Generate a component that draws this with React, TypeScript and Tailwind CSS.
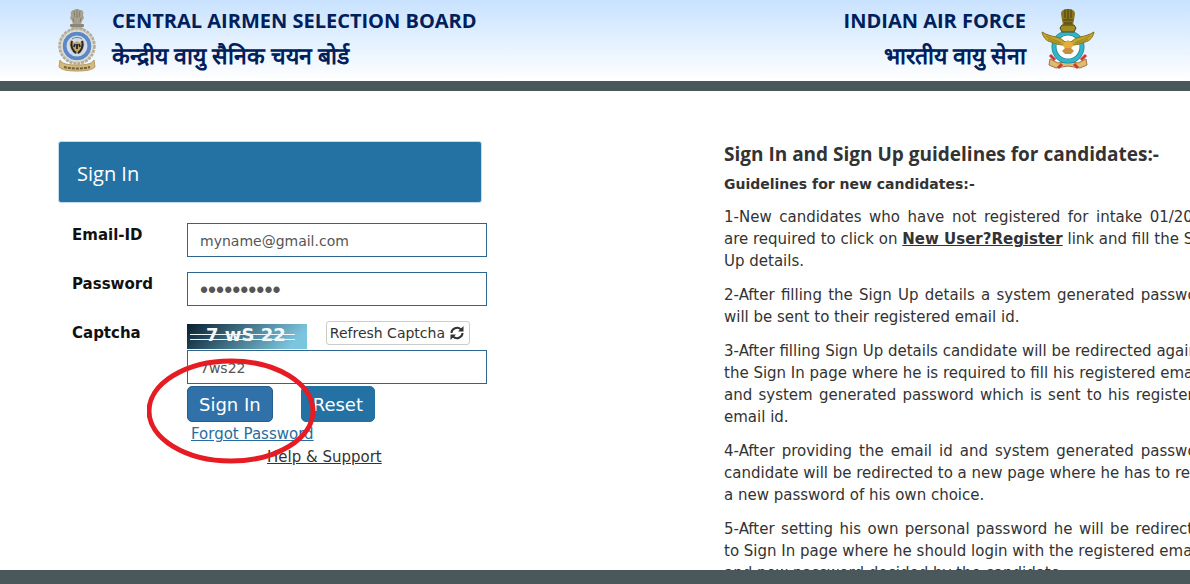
import React, { useState } from "react";

const AirmenLogo = () => (
  <svg viewBox="0 0 40 64" className="h-16 w-10 shrink-0" aria-hidden="true">
    {/* lion capital */}
    <path d="M14 7c-1-3 1-5 3-5 1-1.500 5-1.500 6 0 3 0 4 2 3 5l1 3-2 3-1 4h-8l-1-4-2-3z" fill="#a8a191" />
    <path d="M17 3c1 2 0 4 1 6M23 3c-1 2 0 4-1 6M20 2v8M16 10l1 4M24 10l-1 4" stroke="#857d6a" strokeWidth="1" fill="none" />
    <rect x="13" y="16" width="14" height="3" rx="1" fill="#8d8676" />
    <path d="M15 19h10l2 3H13z" fill="#b5ad9b" />
    {/* wreath and ring */}
    <circle cx="20" cy="38" r="17.500" fill="#d6d3c8" stroke="#b3ac98" strokeWidth="2.500" strokeDasharray="3 1" />
    <circle cx="20" cy="38" r="12.500" fill="#cddcf0" stroke="#5c88c6" strokeWidth="4" />
    <circle cx="20" cy="38" r="15" fill="none" stroke="#e3e1d8" strokeWidth="1" />
    <path d="M13 33c2-2 3 0 4 2l3-2 3 2c1-2 2-4 4-2 1 5-1 11-5 13h-4c-4-2-6-8-5-13z" fill="#c4a262" />
    <path d="M15 33c-2 5 1 10 4 12M25 33c2 5-1 10-4 12M18 36l-1 3M22 36l1 3M20 36v5" stroke="#23252c" strokeWidth="1.800" fill="none" />
    <path d="M15 31c3-2 7-2 10 0" stroke="#77777b" strokeWidth="1" fill="none" />
    {/* scroll */}
    <path d="M3 52c2 4 8 5 17 5s15-1 17-5l1 7c-3 3-9 4-18 4S5 62 2 59z" fill="#d0ba82" stroke="#b39c63" strokeWidth="1" />
    <path d="M7 59c7 2 19 2 26 0" stroke="#756133" strokeWidth="2" strokeDasharray="3 1" fill="none" />
  </svg>
);

const AirForceLogo = () => (
  <svg viewBox="0 0 54 62" className="h-[62px] w-[54px] shrink-0" aria-hidden="true">
    {/* crossed ribbons */}
    <path d="M9 51l8 4 10-2 10 2 8-4 1 6-7 3-12-2-12 2-7-3z" fill="#dcbb74" stroke="#a1763a" strokeWidth="1" />
    <path d="M9 47l5 5M45 47l-5 5M17 60l4-4M37 60l-4-4" stroke="#cf3b2e" strokeWidth="3" />
    {/* ring */}
    <circle cx="27" cy="39" r="14" fill="#fff" stroke="#16879b" strokeWidth="5" />
    <circle cx="27" cy="39" r="14" fill="none" stroke="#35b4c8" strokeWidth="3.500" />
    {/* wings */}
    <path d="M1 24c5 3 9 4 14 5 4 1 7 3 9 5l3-1 3 1c2-2 5-4 9-5 5-1 9-2 14-5-1 5-4 9-9 10-5 2-9 3-12 3l-5 1-5-1c-3 0-7-1-12-3-5-1-8-5-9-10z" fill="#c6a52b" stroke="#84701c" strokeWidth="1" />
    <path d="M5 28c5 3 10 4 15 7M49 28c-5 3-10 4-15 7M7 31c4 2 8 3 12 4M47 31c-4 2-8 3-12 4" stroke="#9c8522" strokeWidth="1" fill="none" />
    <ellipse cx="27" cy="37" rx="5" ry="4" fill="#e5ae3c" />
    <path d="M24 40h6l3 3-3 3h-6l-3-3z" fill="#c98f3a" />
    {/* lion capital */}
    <path d="M20 6c0-4 3-4 4-5h6c1 1 4 1 4 5l-1 6-1 5h-10l-1-5z" fill="#8a751c" />
    <path d="M24 2v8M27 1v10M30 2v8M22 12h10M23 15h8" stroke="#453c10" strokeWidth="1" />
    <path d="M21 17h12l2 3-2 4H21l-2-4z" fill="#a08a24" stroke="#4e4412" strokeWidth="1" />
  </svg>
);

const RefreshIcon = () => (
  <svg viewBox="0 0 14 14" className="h-3.5 w-3.5" fill="none" aria-hidden="true">
    <path d="M1.500 7a5.500 5 0 0 1 9.500-3.500M12.500 7a5.500 5 0 0 1-9.500 3.500" stroke="currentColor" strokeWidth="2" />
    <path d="M13.500 0v5.500H8zM.5 14V8.500H6z" fill="currentColor" />
  </svg>
);

const CaptchaImage = () => (
  <svg viewBox="0 0 120 25" className="h-[25px] w-[120px]" role="img" aria-label="Captcha">
    <defs>
      <linearGradient id="captcha" x1="0" y1="0" x2="1" y2="0.200">
        <stop offset="0" stopColor="#08202f" />
        <stop offset="1" stopColor="#7cc5de" />
      </linearGradient>
    </defs>
    <rect width="120" height="25" fill="url(#captcha)" />
    <text x="19" y="17" fill="#f4fafc" className="font-['DejaVu_Sans'] text-[18px] font-bold">
      7 wS 22
    </text>
    <path d="M3 10.500h105M3 15.500h105" stroke="#eef6f9" strokeWidth="1" />
  </svg>
);

const inputClass =
  "block h-[34px] w-[300px] border border-[#2f6690] bg-white px-3 pt-[2px] text-[#555] outline-none";
const labelClass = "w-[115px] shrink-0 text-[15px] leading-6 font-bold text-[#111]";

const SignInForm = () => {
  const [email, setEmail] = useState("myname@gmail.com");
  const [password, setPassword] = useState("mypassword");
  const [captcha, setCaptcha] = useState("7ws22");

  const handleReset = () => {
    setEmail("");
    setPassword("");
    setCaptcha("");
  };

  return (
    <form onSubmit={(e) => e.preventDefault()} className="w-[430px] shrink-0">
      <h2 className="mr-[6px] rounded-[3px] border border-[#c5dbea] bg-[#2471a3] px-[18px] pt-[18px] pb-[14px] font-['Open_Sans',sans-serif] text-xl leading-7 text-white">
        Sign In
      </h2>
      <div className="mt-5 flex pl-[14px]">
        <label htmlFor="email" className={labelClass}>
          Email-ID
        </label>
        <input
          id="email"
          type="text"
          value={email}
          onChange={(e) => setEmail(e.target.value)}
          className={`${inputClass} text-sm`}
        />
      </div>
      <div className="mt-[15px] flex pl-[14px]">
        <label htmlFor="password" className={labelClass}>
          Password
        </label>
        <input
          id="password"
          type="password"
          value={password}
          onChange={(e) => setPassword(e.target.value)}
          className={`${inputClass} font-['Liberation_Sans',sans-serif] text-[23px]`}
        />
      </div>
      <div className="mt-[15px] flex pl-[14px]">
        <label htmlFor="captchaText" className={labelClass}>
          Captcha
        </label>
        <div className="relative">
          <div className="flex h-[29px] items-start justify-between pr-[17px]">
            <div className="pt-[3px]">
              <CaptchaImage />
            </div>
            <button
              type="button"
              className="flex h-6 items-center gap-[5px] rounded-[3px] border border-[#ccc] pr-[5px] pl-[3px] text-sm text-[#333]"
            >
              Refresh Captcha <RefreshIcon />
            </button>
          </div>
          <input
            id="captchaText"
            type="text"
            value={captcha}
            onChange={(e) => setCaptcha(e.target.value)}
            className={`${inputClass} text-sm`}
          />
          <div className="mt-[2px] flex gap-7">
            <button
              type="submit"
              className="h-9 rounded-[5px] border border-[#285e8e] bg-[#3071a9] px-[11px] pt-[2px] text-lg text-white"
            >
              Sign In
            </button>
            <button
              type="button"
              onClick={handleReset}
              className="h-9 rounded-[5px] border border-[#2471a3] bg-[#2471a3] px-[11px] pt-[2px] text-lg text-white"
            >
              Reset
            </button>
          </div>
          <div className="mt-px pl-1 text-[15px] leading-[23px]">
            <a href="#forgot" className="text-[#2a6c9f] underline">
              Forgot Password
            </a>
          </div>
          <div className="pl-20 text-[15px] leading-[23px]">
            <a href="#help" className="text-[#333] underline">
              Help &amp; Support
            </a>
          </div>
          {/* highlight around the sign in button */}
          <svg
            viewBox="0 0 170 106"
            className="pointer-events-none absolute top-[37px] -left-10 h-[106px] w-[170px]"
            aria-hidden="true"
          >
            <ellipse cx="84" cy="53" rx="82" ry="50" fill="none" stroke="#e51c23" strokeWidth="5" />
          </svg>
        </div>
      </div>
    </form>
  );
};

// one justified line, the last line of each paragraph stays left aligned
const Line = ({ children }: { children: React.ReactNode }) => (
  <span className="block whitespace-nowrap [text-align-last:justify] last:[text-align-last:left]">
    {children}
  </span>
);

const Guidelines = () => (
  <section className="w-[488px] shrink-0 text-[#333]">
    <h2 className="font-['Open_Sans',sans-serif] text-[19px] leading-[26px] font-bold">
      Sign In and Sign Up guidelines for candidates:-
    </h2>
    <h3 className="mt-[5px] text-sm leading-6 font-bold">Guidelines for new candidates:-</h3>
    <div className="mt-[10px] space-y-3 text-justify text-[15px] leading-[22px]">
      <p>
        <Line>1-New candidates who have not registered for intake 01/2020</Line>
        <Line>
          are required to click on{" "}
          <a href="#register" className="font-bold underline">
            New User?Register
          </a>{" "}
          link and fill the Sign
        </Line>
        <Line>Up details.</Line>
      </p>
      <p>
        <Line>2-After filling the Sign Up details a system generated password</Line>
        <Line>will be sent to their registered email id.</Line>
      </p>
      <p>
        <Line>3-After filling Sign Up details candidate will be redirected again to</Line>
        <Line>the Sign In page where he is required to fill his registered email id</Line>
        <Line>and system generated password which is sent to his registered</Line>
        <Line>email id.</Line>
      </p>
      <p>
        <Line>4-After providing the email id and system generated password</Line>
        <Line>candidate will be redirected to a new page where he has to reset</Line>
        <Line>a new password of his own choice.</Line>
      </p>
      <p>
        <Line>5-After setting his own personal password he will be redirected</Line>
        <Line>to Sign In page where he should login with the registered email id</Line>
        <Line>and new password decided by the candidate.</Line>
      </p>
    </div>
  </section>
);

const headingClass =
  "font-['Open_Sans',sans-serif] text-xl leading-9 font-bold text-[#00205b] whitespace-nowrap";
const hindiClass =
  "font-['Open_Sans',sans-serif] text-[23px] leading-8 font-semibold text-[#00205b] whitespace-nowrap";

export default function App() {
  return (
    <div className="flex h-screen flex-col overflow-hidden bg-white font-['DejaVu_Sans',sans-serif]">
      <header className="flex h-[91px] shrink-0 justify-between border-b-[10px] border-[#4a575b] bg-linear-to-b from-[#c8e2ff] to-white pr-[95px] pl-[57px]">
        <div className="flex gap-[15px]">
          <div className="pt-2">
            <AirmenLogo />
          </div>
          <div className="pt-[3px]">
            <h1 className={headingClass}>CENTRAL AIRMEN SELECTION BOARD</h1>
            <p className={hindiClass} lang="hi">
              केन्द्रीय वायु सैनिक चयन बोर्ड
            </p>
          </div>
        </div>
        <div className="flex gap-[15px] text-right">
          <div className="pt-[3px]">
            <p className={headingClass}>INDIAN AIR FORCE</p>
            <p className={hindiClass} lang="hi">
              भारतीय वायु सेना
            </p>
          </div>
          <div className="pt-2">
            <AirForceLogo />
          </div>
        </div>
      </header>
      <main className="flex min-h-0 flex-1 gap-[236px] overflow-hidden pt-[50px] pl-[58px]">
        <SignInForm />
        <Guidelines />
      </main>
      <footer className="h-[14px] shrink-0 bg-[#4a575b]" />
    </div>
  );
}
